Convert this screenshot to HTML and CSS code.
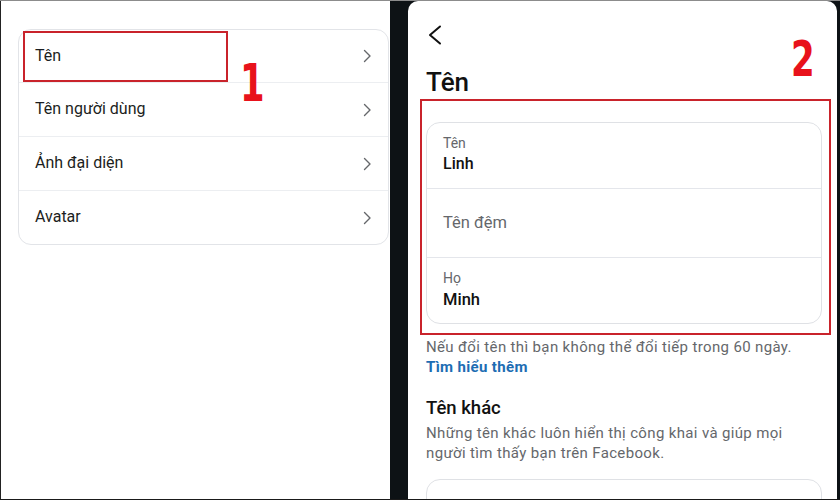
FILE: index.html
```html
<!DOCTYPE html>
<html lang="vi">
<head>
<meta charset="utf-8">
<title>Tên</title>
<link rel="stylesheet" href="styles.css">
</head>
<body>
<div class="screen">
  <section class="pane pane-left">
    <div class="menu-card">
      <div class="menu-row"><span>Tên</span><svg class="chev" viewBox="0 0 10 16" width="10" height="16"><path d="M2.5 2.5 L8 8 L2.5 13.5"/></svg></div>
      <div class="menu-row"><span>Tên người dùng</span><svg class="chev" viewBox="0 0 10 16" width="10" height="16"><path d="M2.5 2.5 L8 8 L2.5 13.5"/></svg></div>
      <div class="menu-row"><span>Ảnh đại diện</span><svg class="chev" viewBox="0 0 10 16" width="10" height="16"><path d="M2.5 2.5 L8 8 L2.5 13.5"/></svg></div>
      <div class="menu-row"><span>Avatar</span><svg class="chev" viewBox="0 0 10 16" width="10" height="16"><path d="M2.5 2.5 L8 8 L2.5 13.5"/></svg></div>
    </div>
    <div class="mark mark-1"></div>
    <span class="step step-1">1</span>
  </section>

  <section class="pane pane-right">
    <svg class="back" viewBox="0 0 16 20" width="16" height="20"><path d="M13 1.5 L3 10 L13 18.5"/></svg>
    <h1 class="title">Tên</h1>
    <div class="field-card">
      <div class="field field-filled">
        <span class="field-label">Tên</span>
        <span class="field-value">Linh</span>
      </div>
      <div class="field field-empty">
        <span class="field-placeholder">Tên đệm</span>
      </div>
      <div class="field field-filled field-last">
        <span class="field-label">Họ</span>
        <span class="field-value">Minh</span>
      </div>
    </div>
    <p class="note">Nếu đổi tên thì bạn không thể đổi tiếp trong 60 ngày.<br><a class="link" href="#">Tìm hiểu thêm</a></p>
    <h2 class="subtitle">Tên khác</h2>
    <p class="desc">Những tên khác luôn hiển thị công khai và giúp mọi người tìm thấy bạn trên Facebook.</p>
    <div class="other-card"></div>
    <div class="mark mark-2"></div>
    <span class="step step-2">2</span>
  </section>
</div>
</body>
</html>
```

FILE: styles.css
```css
* { box-sizing: border-box; }
html, body { margin: 0; padding: 0; }
body {
  width: 840px;
  height: 500px;
  overflow: hidden;
  font-family: Roboto, "Noto Sans", Arial, sans-serif;
  color: #1c1e21;
}
.screen {
  width: 840px;
  height: 500px;
  display: flex;
  background: #0d1215;
  border-top: 1px solid #8c8c8c;
  border-bottom: 1px solid #1a1a1a;
  overflow: hidden;
}
.pane {
  position: relative;
  background: #fff;
  overflow: hidden;
}
.pane-left {
  width: 390px;
  border-left: 1px solid #222;
  padding: 28px 0 0 17px;
  flex: none;
}
.menu-card {
  width: 371px;
  border: 1px solid #e2e4e8;
  border-radius: 13px;
}
.menu-row {
  height: 54px;
  display: flex;
  align-items: center;
  justify-content: space-between;
  padding: 0 16px 0 16px;
  font-size: 16px;
  border-bottom: 1px solid #eceef1;
}
.menu-row:first-child { height: 53px; }
.menu-row:last-child { border-bottom: none; height: 53px; }
.menu-row span { position: relative; top: -1px; }
.chev path {
  fill: none;
  stroke: #65676b;
  stroke-width: 1.4;
  stroke-linecap: round;
  stroke-linejoin: round;
}
.mark {
  position: absolute;
  border: 2px solid #c9232b;
}
.mark-1 { left: 22px; top: 30px; width: 205px; height: 51px; }
.step {
  position: absolute;
  font-family: "DejaVu Sans", sans-serif;
  font-weight: 700;
  color: #e8121b;
  line-height: 1;
  transform: scaleX(0.68);
  transform-origin: left top;
}
.step-1 { left: 239px; top: 56px; font-size: 52px; }
.pane-right {
  flex: 1;
  margin-left: 18px;
  margin-right: 3px;
  border-radius: 10px 10px 0 0;
  padding: 24px 18px 0 18px;
}
.back { display: block; margin-left: 1px; }
.back path {
  fill: none;
  stroke: #111;
  stroke-width: 2;
  stroke-linecap: round;
  stroke-linejoin: round;
}
.title {
  margin: 21px 0 0 0;
  font-size: 26px;
  line-height: 32px;
  font-weight: 500;
  color: #111;
}
.field-card {
  margin-top: 24px;
  width: 396px;
  border: 1px solid #dfe1e5;
  border-radius: 14px;
}
.field {
  display: flex;
  flex-direction: column;
  padding: 0 16px;
  border-bottom: 1px solid #e4e6eb;
}
.field-filled { height: 66px; padding-top: 11px; }
.field-empty { height: 69px; justify-content: center; }
.field-last { border-bottom: none; height: 65px; }
.field-label {
  font-size: 14px;
  line-height: 18px;
  color: #65676b;
}
.field-value {
  margin-top: 2px;
  font-size: 16px;
  line-height: 20px;
  font-weight: 500;
  color: #111;
}
.field-last .field-value { margin-top: 3px; font-size: 16.5px; }
.field-placeholder {
  font-size: 16.5px;
  line-height: 20px;
  color: #65676b;
}
.note {
  margin: 13px 0 0 0;
  font-size: 15px;
  letter-spacing: 0.35px;
  line-height: 20px;
  color: #65676b;
}
.link {
  color: #1d6db3;
  font-weight: 700;
  text-decoration: none;
}
.subtitle {
  margin: 19px 0 0 0;
  font-size: 18.5px;
  line-height: 24px;
  font-weight: 500;
  color: #111;
}
.desc {
  margin: 4px 0 0 0;
  width: 380px;
  font-size: 15px;
  letter-spacing: 0.35px;
  line-height: 19.5px;
  color: #65676b;
}
.other-card {
  margin-top: 16px;
  width: 396px;
  height: 60px;
  border: 1px solid #dfe1e5;
  border-radius: 14px;
}
.mark-2 { left: 12px; top: 98px; width: 411px; height: 236px; }
.step-2 { left: 383px; top: 33px; font-size: 50px; }
```
